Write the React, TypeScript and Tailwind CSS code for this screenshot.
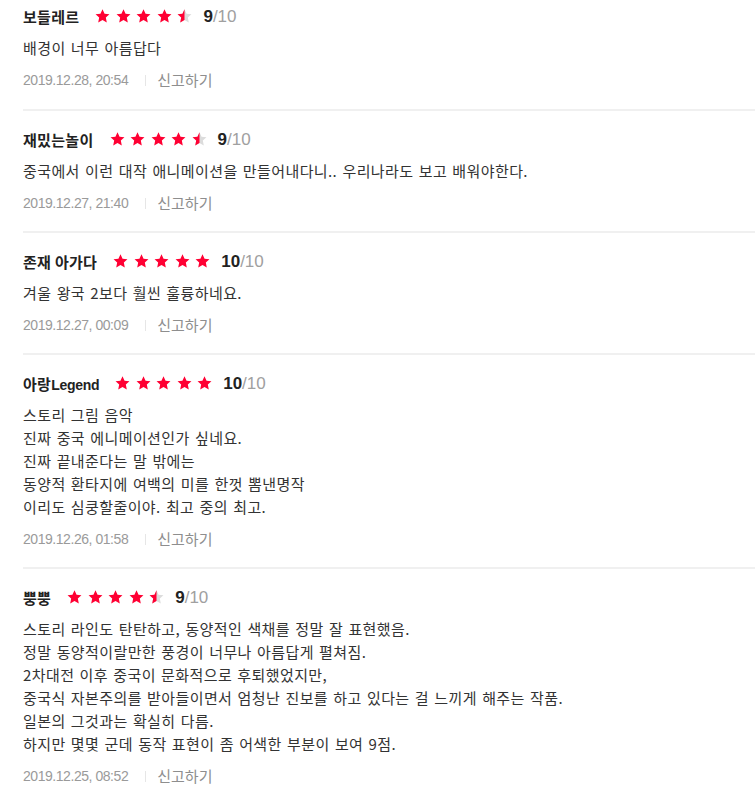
import React from "react";

type Review = {
  name: string;
  score: number;
  lines: string[];
  date: string;
};

const reviews: Review[] = [
  { name: "보들레르", score: 9, lines: ["배경이 너무 아름답다"], date: "2019.12.28, 20:54" },
  {
    name: "재밌는놀이",
    score: 9,
    lines: ["중국에서 이런 대작 애니메이션을 만들어내다니.. 우리나라도 보고 배워야한다."],
    date: "2019.12.27, 21:40",
  },
  { name: "존재 아가다", score: 10, lines: ["겨울 왕국 2보다 훨씬 훌륭하네요."], date: "2019.12.27, 00:09" },
  {
    name: "아랑Legend",
    score: 10,
    lines: [
      "스토리 그림 음악",
      "진짜 중국 에니메이션인가 싶네요.",
      "진짜 끝내준다는 말 밖에는",
      "동양적 환타지에 여백의 미를 한껏 뽐낸명작",
      "이리도 심쿵할줄이야. 최고 중의 최고.",
    ],
    date: "2019.12.26, 01:58",
  },
  {
    name: "뿡뿡",
    score: 9,
    lines: [
      "스토리 라인도 탄탄하고, 동양적인 색채를 정말 잘 표현했음.",
      "정말 동양적이랄만한 풍경이 너무나 아름답게 펼쳐짐.",
      "2차대전 이후 중국이 문화적으로 후퇴했었지만,",
      "중국식 자본주의를 받아들이면서 엄청난 진보를 하고 있다는 걸 느끼게 해주는 작품.",
      "일본의 그것과는 확실히 다름.",
      "하지만 몇몇 군데 동작 표현이 좀 어색한 부분이 보여 9점.",
    ],
    date: "2019.12.25, 08:52",
  },
];

const STAR =
  "M7.5 0.2 L9.56 4.67 L14.44 5.24 L10.83 8.58 L11.79 13.41 L7.5 11 L3.21 13.41 L4.17 8.58 L0.56 5.24 L5.44 4.67 Z";

function Star({ half }: { half?: boolean }) {
  return (
    <svg width="15" height="14" viewBox="0 0 15 14" className="block">
      <defs>
        <clipPath id="lefthalf">
          <rect x="0" y="0" width="7.5" height="14" />
        </clipPath>
      </defs>
      {half ? (
        <>
          <path d={STAR} fill="#dcdcdc" />
          <path d={STAR} fill="#ff0033" clipPath="url(#lefthalf)" />
        </>
      ) : (
        <path d={STAR} fill="#ff0033" />
      )}
    </svg>
  );
}

function Stars({ score }: { score: number }) {
  const full = Math.floor(score / 2);
  const half = score % 2 === 1;
  return (
    <div className="flex items-center gap-[5.5px]">
      {[0, 1, 2, 3, 4].map((i) => (
        <Star key={i} half={half && i === full} />
      ))}
    </div>
  );
}

function Name({ name }: { name: string }) {
  const parts = name.split(/([A-Za-z]+)/).filter((p) => p.length > 0);
  return (
    <span className="font-bold text-[#222]">
      {parts.map((p, i) =>
        /^[A-Za-z]+$/.test(p) ? (
          <span key={i} className="font-['Liberation_Sans',Arial,sans-serif] text-[14px] tracking-[-0.3px]">
            {p}
          </span>
        ) : (
          <span key={i} className="text-[15px] tracking-[0.3px]">
            {p}
          </span>
        )
      )}
    </span>
  );
}

export default function App() {
  return (
    <div
      className="w-[755px] bg-white pl-[23px] text-[#333]"
      style={{ fontFamily: '"Noto Sans CJK KR", "Noto Sans", sans-serif' }}
    >
      {reviews.map((r, idx) => (
        <div
          key={idx}
          className={
            idx === 0
              ? "pt-[5px] pb-[19px]"
              : "border-t-2 border-[#f0f0f0] pt-[17px] pb-[18px]"
          }
        >
          <div className="flex h-[22px] items-center">
            <Name name={r.name} />
            <div className="ml-[16px]">
              <Stars score={r.score} />
            </div>
            <span className="ml-[11px] font-['Liberation_Sans',Arial,sans-serif] text-[17px] leading-none">
              <span className="font-bold text-[#222]">{r.score}</span>
              <span className="text-[#a0a0a0]">/10</span>
            </span>
          </div>
          <div className="mt-[9px] text-[15px] leading-[23px] tracking-[0.4px] [word-spacing:1.5px] text-[#333]">
            {r.lines.map((l, i) => (
              <div key={i}>{l}</div>
            ))}
          </div>
          <div className="mt-[11px] flex h-[20px] items-center">
            <span className="font-['Liberation_Sans',Arial,sans-serif] text-[14px] tracking-[-0.45px] text-[#9a9a9a]">
              {r.date}
            </span>
            <span className="ml-[17px] mr-[11px] h-[11px] w-px bg-[#e6e6e6]" />
            <span className="text-[15px] text-[#8e8e8e]">신고하기</span>
          </div>
        </div>
      ))}
    </div>
  );
}
